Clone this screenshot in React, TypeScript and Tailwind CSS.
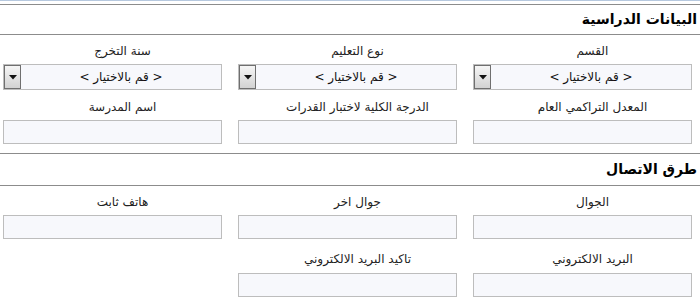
import React from 'react';

const FONT = { fontFamily: '"DejaVu Sans", sans-serif' };

type Field = { label: string; kind: 'select' | 'text' | 'none' };

const SelectBox: React.FC = () => (
  <div className="flex h-[26px] items-stretch border border-[#bdbdbd] bg-[#f7f8fc]">
    <span className="flex-1 text-center text-[12px] leading-[24px] text-[#111]">&lt; قم بالاختيار &gt;</span>
    <span className="flex w-[17px] items-center justify-center border border-[#6f6f6f] bg-gradient-to-b from-[#f6f6f6] to-[#d2d2d2]">
      <svg width="8" height="5" viewBox="0 0 8 5">
        <path d="M0 0 H8 L4 4.5 Z" fill="#111" />
      </svg>
    </span>
  </div>
);

const TextBox: React.FC = () => <div className="h-[24px] border border-[#bdbdbd] bg-[#f7f8fc]" />;

const FieldCell: React.FC<{ field: Field; gap: string }> = ({ field, gap }) => {
  if (field.kind === 'none') return <div />;
  return (
    <div className="flex flex-col">
      <label className="block h-5 pl-5 text-center text-[12px] leading-5 text-[#222]">{field.label}</label>
      <div className={gap}>{field.kind === 'select' ? <SelectBox /> : <TextBox />}</div>
    </div>
  );
};

const FieldRow: React.FC<{ fields: Field[]; className: string; gap: string }> = ({ fields, className, gap }) => (
  <div className={`grid grid-cols-3 gap-x-[16px] pl-[3px] pr-[8px] ${className}`}>
    {fields.map((f, i) => (
      <FieldCell key={i} field={f} gap={gap} />
    ))}
  </div>
);

const SectionHeader: React.FC<{ title: string; className: string }> = ({ title, className }) => (
  <div className={`border-y border-[#8c8c8c] pr-[3px] ${className}`}>
    <h2 className="text-[14px] font-bold text-black">{title}</h2>
  </div>
);

export default function App() {
  return (
    <div dir="rtl" className="h-[308px] w-[700px] overflow-hidden bg-white" style={FONT}>
      <div className="h-px bg-[#b7c9df]" />

      {/* البيانات الدراسية */}
      <SectionHeader title="البيانات الدراسية" className="mt-[3px] h-[31px] pt-[4px] leading-[20px]" />
      <FieldRow
        className="pt-[6px]"
        gap="mt-[3px]"
        fields={[
          { label: 'القسم', kind: 'select' },
          { label: 'نوع التعليم', kind: 'select' },
          { label: 'سنة التخرج', kind: 'select' },
        ]}
      />
      <FieldRow
        className="pt-[7px]"
        gap="mt-[3px]"
        fields={[
          { label: 'المعدل التراكمي العام', kind: 'text' },
          { label: 'الدرجة الكلية لاختبار القدرات', kind: 'text' },
          { label: 'اسم المدرسة', kind: 'text' },
        ]}
      />

      {/* طرق الاتصال */}
      <SectionHeader title="طرق الاتصال" className="mt-[9px] h-[33px] pt-[5px] leading-[20px]" />
      <FieldRow
        className="pt-[6px]"
        gap="mt-[3px]"
        fields={[
          { label: 'الجوال', kind: 'text' },
          { label: 'جوال اخر', kind: 'text' },
          { label: 'هاتف ثابت', kind: 'text' },
        ]}
      />
      <FieldRow
        className="pt-[10px]"
        gap="mt-[4px]"
        fields={[
          { label: 'البريد الالكتروني', kind: 'text' },
          { label: 'تاكيد البريد الالكتروني', kind: 'text' },
          { label: '', kind: 'none' },
        ]}
      />
    </div>
  );
}
